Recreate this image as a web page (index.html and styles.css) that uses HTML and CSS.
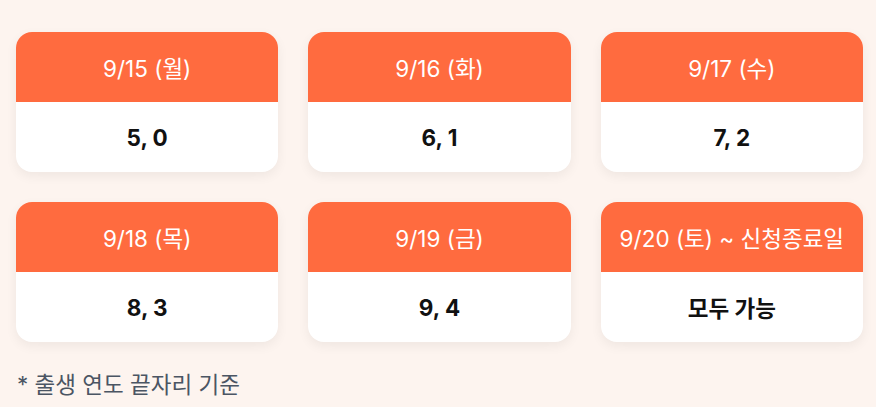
FILE: index.html
```html
<!DOCTYPE html>
<html lang="ko">
<head>
<meta charset="utf-8">
<link rel="stylesheet" href="styles.css">
</head>
<body>
<div class="page">
  <div class="grid">
    <div class="card"><div class="head">9/15 (월)</div><div class="body">5, 0</div></div>
    <div class="card"><div class="head">9/16 (화)</div><div class="body">6, 1</div></div>
    <div class="card"><div class="head">9/17 (수)</div><div class="body">7, 2</div></div>
    <div class="card"><div class="head">9/18 (목)</div><div class="body">8, 3</div></div>
    <div class="card"><div class="head">9/19 (금)</div><div class="body">9, 4</div></div>
    <div class="card"><div class="head">9/20 (토) ~ 신청종료일</div><div class="body">모두 가능</div></div>
  </div>
  <p class="note">* 출생 연도 끝자리 기준</p>
</div>
</body>
</html>
```
FILE: styles.css
```css
html, body {
  margin: 0;
  padding: 0;
  background: #fdf4ef;
  font-family: Inter, "Noto Sans CJK KR", sans-serif;
}
.page {
  padding: 32px 0 0 16px;
  width: 847px;
}
.grid {
  display: grid;
  grid-template-columns: repeat(3, 1fr);
  column-gap: 30px;
  row-gap: 30px;
}
.card {
  border-radius: 16px;
  overflow: hidden;
  background: #fff;
  box-shadow: 0 4px 12px rgba(0, 0, 0, 0.06);
}
.head {
  height: 70px;
  display: flex;
  align-items: center;
  justify-content: center;
  background: #ff6b3f;
  color: #fff;
  font-size: 22.5px;
}
.body {
  height: 70px;
  display: flex;
  align-items: center;
  justify-content: center;
  color: #111;
  font-size: 22.5px;
  font-weight: 700;
}
.note {
  margin: 25px 0 0 1px;
  color: #4b5563;
  font-size: 22.5px;
}
```
